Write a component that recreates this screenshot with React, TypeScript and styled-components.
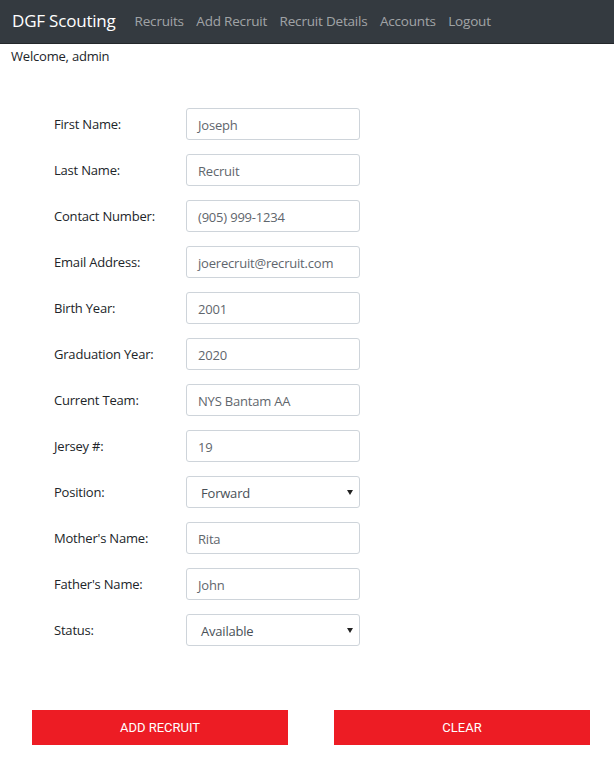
import React from "react";
import styled, { createGlobalStyle } from "styled-components";

const Global = createGlobalStyle`
  html, body { margin: 0; padding: 0; background: #fff; }
  body { font-family: "Open Sans", "Noto Sans", sans-serif; color: #212529; }
  * { box-sizing: border-box; }
`;

const Nav = styled.nav`
  height: 44px;
  background: #343a40;
  display: flex;
  align-items: center;
  padding: 0 12px 2px;
  border-bottom: 1px solid #23272b;
`;

const Brand = styled.span`
  color: #fff;
  font-size: 17px;
  margin-right: 19px;
  letter-spacing: -0.2px;
`;

const NavLink = styled.a`
  color: rgba(255, 255, 255, 0.55);
  font-size: 13.5px;
  margin-right: 12.5px;
  text-decoration: none;
  letter-spacing: -0.2px;
`;

const Welcome = styled.div`
  font-size: 13px;
  padding: 3px 11px 0;
  height: 20px;
  letter-spacing: -0.2px;
`;

const Form = styled.form`
  display: grid;
  grid-template-columns: 132px 174px;
  row-gap: 14px;
  padding: 44px 0 0 54px;
  align-items: center;
`;

const Label = styled.label`
  font-size: 13px;
  letter-spacing: -0.2px;
  color: #212529;
`;

const Field = styled.div`
  position: relative;
  height: 32px;
  border: 1px solid #ced4da;
  border-radius: 3px;
  display: flex;
  align-items: center;
  padding: 1px 11px 0;
  font-size: 13px;
  color: #5f666d;
  letter-spacing: -0.2px;
`;

const SelectField = styled(Field)`
  padding-left: 14px;
  color: #495057;
`;

const Caret = styled.span`
  position: absolute;
  right: 6px;
  top: 13px;
  width: 0;
  height: 0;
  border-left: 3px solid transparent;
  border-right: 3px solid transparent;
  border-top: 5px solid #222;
`;

const Actions = styled.div`
  display: flex;
  gap: 46px;
  padding: 64px 0 0 32px;
`;

const Button = styled.button`
  width: 256px;
  height: 35px;
  background: #ed1c24;
  color: #fff;
  border: none;
  font-family: Roboto, "Liberation Sans", sans-serif;
  font-size: 13px;
  text-transform: uppercase;
  padding: 0;
`;

const rows: [string, string, boolean?][] = [
  ["First Name:", "Joseph"],
  ["Last Name:", "Recruit"],
  ["Contact Number:", "(905) 999-1234"],
  ["Email Address:", "joerecruit@recruit.com"],
  ["Birth Year:", "2001"],
  ["Graduation Year:", "2020"],
  ["Current Team:", "NYS Bantam AA"],
  ["Jersey #:", "19"],
  ["Position:", "Forward", true],
  ["Mother's Name:", "Rita"],
  ["Father's Name:", "John"],
  ["Status:", "Available", true],
];

export default function App() {
  return (
    <>
      <Global />
      <Nav>
        <Brand>DGF Scouting</Brand>
        <NavLink>Recruits</NavLink>
        <NavLink>Add Recruit</NavLink>
        <NavLink>Recruit Details</NavLink>
        <NavLink>Accounts</NavLink>
        <NavLink>Logout</NavLink>
      </Nav>
      <Welcome>Welcome, admin</Welcome>
      <Form>
        {rows.map(([label, value, select]) => (
          <React.Fragment key={label}>
            <Label>{label}</Label>
            {select ? (
              <SelectField>
                {value}
                <Caret />
              </SelectField>
            ) : (
              <Field>{value}</Field>
            )}
          </React.Fragment>
        ))}
      </Form>
      <Actions>
        <Button type="button">Add Recruit</Button>
        <Button type="button">Clear</Button>
      </Actions>
    </>
  );
}
